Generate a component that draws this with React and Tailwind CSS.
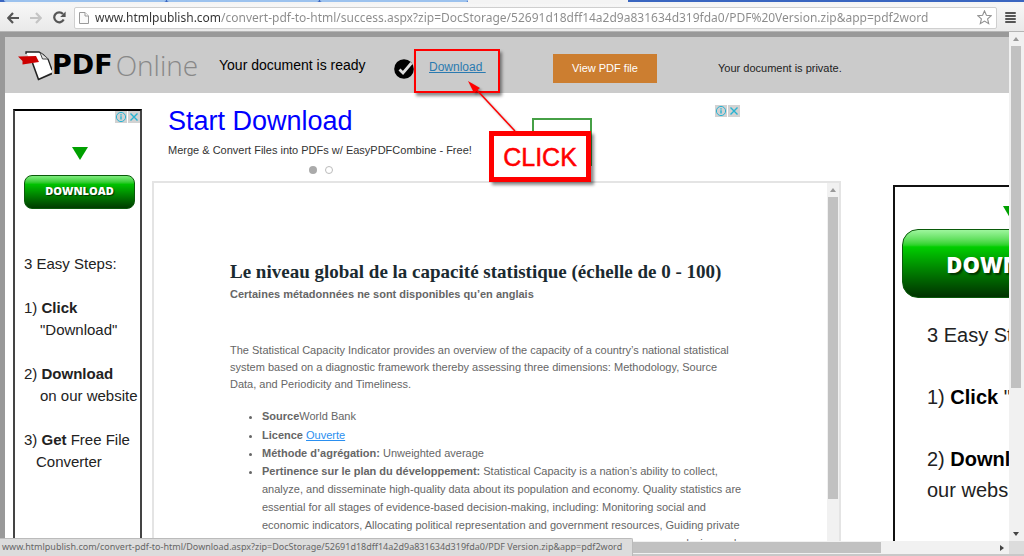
import React, { useState } from "react";

const PAGE_URL =
  "www.htmlpublish.com/convert-pdf-to-html/success.aspx?zip=DocStorage/52691d18dff14a2d9a831634d319fda0/PDF%20Version.zip&app=pdf2word";
const STATUS_URL =
  "www.htmlpublish.com/convert-pdf-to-html/Download.aspx?zip=DocStorage/52691d18dff14a2d9a831634d319fda0/PDF Version.zip&app=pdf2word";

const relevance = [
  "analyze, and disseminate high-quality data about its population and economy. Quality statistics are",
  "essential for all stages of evidence-based decision-making, including: Monitoring social and",
  "economic indicators, Allocating political representation and government resources, Guiding private",
  "sector investment, as well as informing the international donor community for program design and",
];

function Arrow({ className, points }) {
  return (
    <svg className={className} width="8" height="8" viewBox="0 0 8 8" aria-hidden="true">
      <polygon points={points} fill="currentColor" />
    </svg>
  );
}

// Browser chrome
function Toolbar() {
  const [url, setUrl] = useState(PAGE_URL);

  return (
    <div className="flex h-7 shrink-0 items-center border-b border-[#b5b5b5] bg-linear-to-b from-[#f7f7f7] to-[#e9e9e9] pl-[7px] pr-2">
      <button aria-label="Back" className="text-[#555]">
        <svg width="12" height="12" viewBox="0 0 12 12" fill="none" stroke="currentColor" strokeWidth="2.2">
          <path d="M12 6H1.5M6 1L1.3 6L6 11" />
        </svg>
      </button>
      <button aria-label="Forward" className="ml-[11px] text-[#c4c4c4]">
        <svg width="12" height="12" viewBox="0 0 12 12" fill="none" stroke="currentColor" strokeWidth="2.2">
          <path d="M0 6H10.5M6 1L10.7 6L6 11" />
        </svg>
      </button>
      <button aria-label="Reload" className="ml-[11px] text-[#555]">
        <svg width="13" height="13" viewBox="0 0 13 13" fill="none" stroke="currentColor" strokeWidth="2.2">
          <path d="M10.7 8.6A5 5 0 1 1 10 3" />
          <path d="M12.6 0.4V6H7.2Z" fill="currentColor" stroke="none" />
        </svg>
      </button>
      <div className="ml-[8px] flex h-[22px] flex-1 items-center rounded-xs border border-[#cfcfcf] bg-white px-1">
        <svg width="10" height="12" viewBox="0 0 10 12" fill="#fafafa" stroke="#9a9a9a" className="shrink-0">
          <path d="M0.5 0.5H6L9.5 4V11.5H0.5Z" />
          <path d="M6 0.5V4H9.5" />
        </svg>
        <input
          aria-label="Address"
          value={url}
          onChange={(e) => setUrl(e.target.value)}
          className="ml-[6px] min-w-0 flex-1 bg-linear-to-r from-[#333] from-[125px] to-[#8a8a8a] to-[125px] bg-clip-text font-['Noto_Sans',sans-serif] text-[12px] leading-5 text-transparent outline-none"
        />
        <button aria-label="Bookmark this page">
          <svg width="15" height="15" viewBox="0 0 15 15" fill="#fff" stroke="#8f8f8f" strokeWidth="1.1">
            <path d="M7.5 0.9L9.4 5.3L14.2 5.7L10.6 8.9L11.7 13.7L7.5 11.1L3.3 13.7L4.4 8.9L0.8 5.7L5.6 5.3Z" />
          </svg>
        </button>
      </div>
      <button aria-label="Menu" className="ml-2 flex w-[11px] flex-col gap-px">
        <span className="h-[2px] rounded-xs bg-[#555]" />
        <span className="h-[2px] rounded-xs bg-[#555]" />
        <span className="h-[2px] rounded-xs bg-[#555]" />
        <span className="h-[2px] rounded-xs bg-[#555]" />
      </button>
    </div>
  );
}

function Logo() {
  return (
    <a href="#home" aria-label="PDF Online" className="flex w-[180px] items-center whitespace-nowrap">
      <svg width="34" height="31" viewBox="0 0 34 31" className="shrink-0">
        <path d="M8 2H21L25 4L30 8L34 22L20 29L14 14Z" fill="#fff" />
        <path d="M8 4V2H21L25 4.5L30 9L34 20" fill="none" stroke="#222" strokeWidth="1.3" />
        <path d="M14.5 13L20.5 29.5L34 23.5" fill="none" stroke="#222" strokeWidth="1.6" />
        <path d="M22 2.5L24.5 9L30 9" fill="#e4e4e4" stroke="#333" strokeWidth="0.9" />
        <path d="M0 6.5L18 6L21 12L4.5 14.5L4.5 11Z" fill="#c00" />
      </svg>
      <span className="font-['DejaVu_Sans',sans-serif] text-[27px] leading-9 font-bold text-black">PDF</span>
      <span className="ml-[3px] font-['Open_Sans',sans-serif] text-[28px] leading-9 font-light text-[#888]">Online</span>
    </a>
  );
}

// Download link with the red "CLICK" pointer over it
function DownloadCallout() {
  return (
    <div className="relative h-11 w-[86px] shrink-0 self-end pt-[5px] pl-[15px]">
      <a href="#download" className="text-[12px] leading-5 whitespace-pre text-[#2a7ab0] underline">{"Download "}</a>
      <div className="pointer-events-none absolute inset-0 border-2 border-[#f00] shadow-[2px_3px_3px_rgba(0,0,0,0.45)]" />
      <svg className="absolute top-8 left-[53px] drop-shadow-[2px_2px_1px_rgba(0,0,0,0.3)]" width="52" height="52" viewBox="0 0 52 52">
        <path d="M8 7L48 50" stroke="#f00" strokeWidth="1.5" />
        <polygon points="1,0 13,7 7,12" fill="#f00" />
      </svg>
      <div className="absolute top-[82px] left-[75px] flex h-[51px] w-[102px] items-center justify-center border-5 border-[#f00] bg-white text-[25px] leading-6 text-[#f00] shadow-[3px_3px_3px_rgba(0,0,0,0.45)] [-webkit-text-stroke:0.5px_#f00]">
        CLICK
      </div>
    </div>
  );
}

function SiteHeader() {
  return (
    <header className="relative z-10 flex h-14 shrink-0 items-center bg-[#cbcbcb] pl-[13px] whitespace-nowrap">
      <Logo />
      <p className="ml-[21px] w-[154px] text-[14px] leading-5 text-black">Your document is ready</p>
      <svg className="mt-2 ml-[21px] shrink-0" width="20" height="20" viewBox="0 0 20 20">
        <circle cx="10" cy="10" r="9.8" fill="#000" />
        <path d="M5.5 10.5L9 14L17.5 4" fill="none" stroke="#ddd" strokeWidth="2.8" />
      </svg>
      <DownloadCallout />
      <button className="mt-[6px] ml-[53px] h-[29px] w-[104px] shrink-0 bg-[#cc7e30] text-[11px] leading-5 text-white">View PDF file</button>
      <p className="mt-[6px] ml-[61px] text-[11px] leading-5 text-[#222]">Your document is private.</p>
    </header>
  );
}

function AdChoices() {
  return (
    <div className="flex gap-px">
      <button aria-label="Ad information" className="bg-[#d2d2d2]">
        <svg width="12" height="12" viewBox="0 0 12 12" fill="none" stroke="#27b3d2" className="block">
          <circle cx="6" cy="6" r="4.6" />
          <path d="M6 5.2V8.6M6 3.2V4.4" strokeWidth="1.4" />
        </svg>
      </button>
      <button aria-label="Close ad" className="bg-[#d2d2d2]">
        <svg width="12" height="12" viewBox="0 0 12 12" stroke="#27b3d2" strokeWidth="1.4" className="block">
          <path d="M2.5 2.5L9.5 9.5M9.5 2.5L2.5 9.5" />
        </svg>
      </button>
    </div>
  );
}

function LeftAd() {
  return (
    <aside className="mt-4 w-[129px] shrink-0 border-2 border-b-0 border-[#444] border-t-black text-[15px] leading-[22px] whitespace-nowrap text-[#222]">
      <div className="flex h-9 items-start justify-end"><AdChoices /></div>
      <svg width="16" height="13" viewBox="0 0 16 13" className="ml-[57px]">
        <polygon points="0,0 16,0 8,13" fill="#00a000" />
      </svg>
      <button className="mt-[15px] ml-[9px] block h-[34px] w-[111px] rounded-lg border border-[#0a5a0a] bg-linear-to-b from-[#7dec7d] via-[#00c400] via-25% to-[#003d00] pb-[3px] font-['Open_Sans',sans-serif] text-[11px] leading-4 font-extrabold text-white [text-shadow:1px_1px_1px_#030]">
        DOWNLOAD
      </button>
      <div className="mt-[44px] pl-[9px]">
        <p>3 Easy Steps:</p>
        <p className="mt-[22px]">1) <b>Click</b></p>
        <p className="pl-4">"Download"</p>
        <p className="mt-[22px]">2) <b>Download</b></p>
        <p className="pl-4">on our website</p>
        <p className="mt-[22px]">3) <b>Get</b> Free File</p>
        <p className="pl-3">Converter</p>
      </div>
    </aside>
  );
}

function RightAd() {
  return (
    <aside className="mt-[92px] ml-[52px] min-w-0 flex-1 overflow-hidden border-2 border-r-0 border-b-0 border-[#111] text-[20px] leading-[31px] whitespace-nowrap text-[#222]">
      <svg width="28" height="24" viewBox="0 0 28 24" className="mt-[19px] ml-[108px] max-w-none">
        <polygon points="0,0 28,0 14,24" fill="#00a000" />
      </svg>
      <button className="relative -mt-px ml-[7px] block h-[69px] w-[226px] rounded-2xl border border-[#0a5a0a] bg-linear-to-b from-[#9df59d] via-[#00cf00] via-25% to-[#003300] font-['Open_Sans',sans-serif] text-[22px] leading-6 font-extrabold text-white [text-shadow:2px_2px_2px_#030]">
        DOWNLOAD
      </button>
      <div className="mt-[22px] pl-8">
        <p>3 Easy Steps:</p>
        <p className="mt-[31px]">1) <b className="text-black">Click</b> "Download"</p>
        <p className="mt-[31px]">2) <b className="text-black">Download</b> on</p>
        <p>our website</p>
      </div>
    </aside>
  );
}

function BannerAd() {
  return (
    <section className="flex h-[88px] shrink-0 pl-4">
      <div className="w-[364px] pt-3">
        <a href="#start" className="block text-[27px] leading-8 text-[#00f]">Start Download</a>
        <p className="mt-1 text-[11px] leading-[18px] whitespace-nowrap text-[#333]">
          Merge &amp; Convert Files into PDFs w/ EasyPDFCombine - Free!
        </p>
        <div className="mt-[7px] ml-[141px] flex gap-2">
          <span className="size-2 rounded-full bg-[#aaa]" />
          <span className="size-2 rounded-full border border-[#bbb]" />
        </div>
      </div>
      <div className="mt-[25px] h-12 w-15 border-2 border-[#46a046]" />
      <div className="mt-3 ml-[123px]"><AdChoices /></div>
    </section>
  );
}

function DocumentFrame() {
  return (
    <article className="flex min-h-0 flex-1 overflow-hidden border-2 border-b-0 border-[#e4e4e4]">
      <div className="min-w-0 flex-1 pt-[77px] pl-[76px] text-[11px] whitespace-nowrap text-[#666]">
        <h1 className="font-['Liberation_Serif',serif] text-[19px] leading-6 font-bold text-[#1a2a30]">
          Le niveau global de la capacité statistique (échelle de 0 - 100)
        </h1>
        <h2 className="leading-5 font-bold">Certaines métadonnées ne sont disponibles qu’en anglais</h2>
        <p className="mt-[38px] leading-[17px]">
          The Statistical Capacity Indicator provides an overview of the capacity of a country’s national statistical<br />
          system based on a diagnostic framework thereby assessing three dimensions: Methodology, Source<br />
          Data, and Periodicity and Timeliness.
        </p>
        <ul className="mt-[14px] list-disc pl-8 leading-[18px]">
          <li><b>Source</b>World Bank</li>
          <li className="mt-px"><b>Licence</b> <a href="#licence" className="text-[#2a8ff0] underline">Ouverte</a></li>
          <li><b>Méthode d’agrégation:</b> Unweighted average</li>
          <li>
            <b>Pertinence sur le plan du développement:</b> Statistical Capacity is a nation’s ability to collect,
            {relevance.map((line) => <span key={line} className="block">{line}</span>)}
          </li>
        </ul>
      </div>
      <div className="flex w-3 shrink-0 flex-col bg-[#f1f1f1] px-px">
        <Arrow className="mx-auto my-[3px] shrink-0 text-[#999]" points="1,6 4,2 7,6" />
        <div className="h-[302px] shrink-0 bg-[#c1c1c1]" />
      </div>
    </article>
  );
}

export default function App() {
  return (
    <div className="relative flex h-screen flex-col overflow-hidden bg-white font-['Liberation_Sans',Arial,sans-serif]">
      {/* Bottom edge of the tab strip */}
      <div className="flex h-1 shrink-0 border-b-2 border-[#f4f4f4] bg-[#3a66c0]">
        <div className="ml-1 w-[162px] rounded-b-xs bg-[#9cc2ee]" />
        <div className="ml-px w-[152px] rounded-b-xs bg-[#9cc2ee]" />
        <div className="ml-px w-[148px] rounded-b-xs bg-[#9cc2ee]" />
        <div className="w-[160px] bg-[#f4f4f4]" />
      </div>
      <Toolbar />

      <div className="flex min-h-0 flex-1">
        <div className="flex min-w-0 flex-1 flex-col border-t-5 border-l-5 border-[#999]">
          <SiteHeader />
          <main className="flex min-h-0 flex-1 overflow-hidden pl-2">
            <LeftAd />
            <div className="ml-[10px] flex w-[689px] shrink-0 flex-col">
              <BannerAd />
              <DocumentFrame />
            </div>
            <RightAd />
          </main>
        </div>
        {/* Vertical scrollbar */}
        <div className="flex w-[15px] shrink-0 flex-col bg-[#f1f1f1] pr-[3px] pl-[2px]">
          <Arrow className="mx-auto my-[3px] shrink-0 text-[#999]" points="1,6 4,2 7,6" />
          <div className="h-[342px] shrink bg-[#c1c1c1]" />
          <Arrow className="mx-auto mt-auto mb-[3px] shrink-0 text-[#444]" points="1,2 7,2 4,6" />
        </div>
      </div>

      {/* Horizontal scrollbar */}
      <div className="flex h-[15px] shrink-0 items-center border-b-2 border-[#c8c8c8] bg-[#f1f1f1]">
        <div className="h-[11px] w-[86%] bg-[#c1c1c1]" />
        <Arrow className="mr-[3px] ml-auto text-[#444]" points="2,1 6,4 2,7" />
        <div className="h-full w-[15px] bg-[#dcdcdc]" />
      </div>

      <div className="absolute bottom-0 left-0 h-[18px] rounded-tr-xs border-t border-r border-[#bbb] bg-[#dcdcdc] pr-[10px] pl-[2px] font-['Noto_Sans',sans-serif] text-[9px] leading-4 whitespace-nowrap text-[#666]">
        {STATUS_URL}
      </div>
    </div>
  );
}
